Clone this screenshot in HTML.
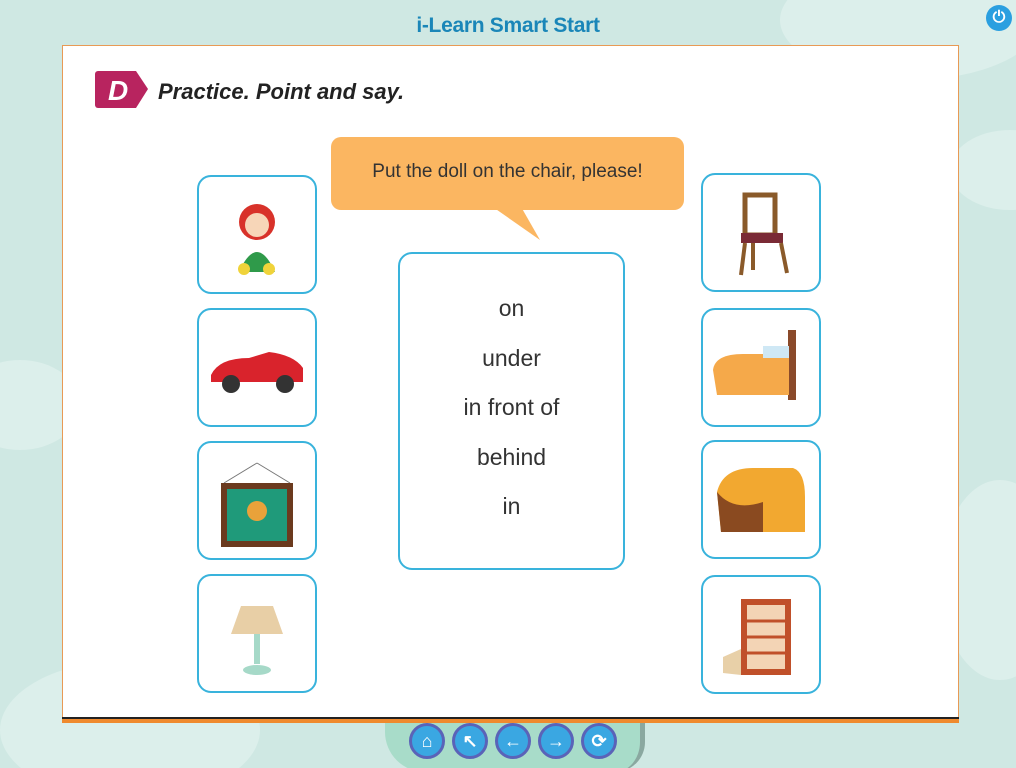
<!DOCTYPE html>
<html><head><meta charset="utf-8"><style>
html,body{margin:0;width:1016px;height:768px;overflow:hidden}
body{background:#cfe8e3;font-family:"Liberation Sans",sans-serif;position:relative}
.cloud{position:absolute;background:#dcefeb;border-radius:50%}
.title{position:absolute;left:0;width:1016px;top:14px;text-align:center;color:#1a86b8;font-weight:bold;font-size:21px;font-family:"Liberation Sans Narrow","Liberation Sans",sans-serif;letter-spacing:-0.3px}
.panel{position:absolute;left:62px;top:45px;width:895px;height:672px;background:#fff;border:1px solid #e89a55;border-bottom:none}
.bl{position:absolute;left:62px;top:717px;width:897px;height:2px;background:#222}
.ol{position:absolute;left:62px;top:719px;width:897px;height:4px;background:#ef8a2e}
.card{position:absolute;width:116px;height:115px;border:2px solid #39b3dc;border-radius:14px;background:#fff}
.center{position:absolute;left:398px;top:252px;width:223px;height:314px;border:2px solid #39b3dc;border-radius:14px;background:#fff;text-align:center;font-size:23px;color:#333}
.center div{height:49.5px}
.bubble{position:absolute;left:331px;top:137px;width:353px;height:73px;background:#fbb661;border-radius:10px;font-size:19px;color:#333;text-align:center;line-height:70px}
.btn{position:absolute;top:723px;width:30px;height:30px;border-radius:50%;background:#3aa7e2;border:3px solid #5a63b8;color:#fff;font-size:18px;text-align:center;line-height:30px;font-weight:bold}
</style></head><body>
<div class="cloud" style="left:780px;top:-40px;width:260px;height:120px"></div>
<div class="cloud" style="left:950px;top:130px;width:120px;height:80px"></div>
<div class="cloud" style="left:-40px;top:360px;width:120px;height:90px"></div>
<div class="cloud" style="left:940px;top:480px;width:120px;height:200px"></div>
<div class="cloud" style="left:0px;top:660px;width:260px;height:140px"></div>
<div style="position:absolute;left:385px;top:712px;width:255px;height:60px;background:#a8dcc9;border-radius:0 0 30px 40px;border-right:5px solid #8aa8a0"></div>
<div class="title">i-Learn Smart Start</div>
<div style="position:absolute;left:986px;top:5px;width:26px;height:26px;border-radius:50%;background:#2a9fe0;color:#fff;text-align:center;line-height:26px;font-size:16px;font-weight:bold">⏻</div>
<div class="panel"></div>
<div class="bl"></div><div class="ol"></div>
<svg style="position:absolute;left:94px;top:68px" width="60" height="44"><path d="M4 3h38l12 18-12 19H4a3 3 0 0 1-3-3V6a3 3 0 0 1 3-3z" fill="#b8245f"/><text x="14" y="32" fill="#fff" font-size="28" font-weight="bold" font-style="italic" font-family="Liberation Sans">D</text></svg>
<div style="position:absolute;left:158px;top:79px;font-size:22px;font-weight:bold;font-style:italic;color:#222">Practice. Point and say.</div>
<div class="bubble">Put the doll on the chair, please!</div>
<svg style="position:absolute;left:480px;top:205px" width="70" height="35"><path d="M10 0L60 35 40 0z" fill="#fbb661"/></svg>
<div class="center"><div style="height:41px"></div><div>on</div><div>under</div><div>in front of</div><div>behind</div><div>in</div></div>
<div class="card" style="left:197px;top:175px"><svg width="116" height="115"><circle cx="58" cy="45" r="18" fill="#d8322a"/><circle cx="58" cy="48" r="12" fill="#f7d6b8"/><path d="M40 95 Q58 55 76 95z" fill="#2f9a4a"/><circle cx="45" cy="92" r="6" fill="#f0d33a"/><circle cx="70" cy="92" r="6" fill="#f0d33a"/></svg></div>
<div class="card" style="left:197px;top:308px"><svg width="116" height="115"><path d="M12 65 Q20 48 50 48 L70 42 Q95 45 104 58 L104 72 H12z" fill="#d9232c"/><circle cx="32" cy="74" r="9" fill="#333"/><circle cx="86" cy="74" r="9" fill="#333"/></svg></div>
<div class="card" style="left:197px;top:441px"><svg width="116" height="115"><path d="M58 20 L25 40 M58 20 L91 40" stroke="#777"/><rect x="22" y="40" width="72" height="64" fill="#6b3a1e"/><rect x="28" y="46" width="60" height="52" fill="#1f9a7a"/><circle cx="58" cy="68" r="10" fill="#e9a23a"/></svg></div>
<div class="card" style="left:197px;top:574px"><svg width="116" height="115"><path d="M42 30 H74 L84 58 H32z" fill="#e8cfa6"/><rect x="55" y="58" width="6" height="30" fill="#a6d9c8"/><ellipse cx="58" cy="94" rx="14" ry="5" fill="#a6d9c8"/></svg></div>
<div class="card" style="left:701px;top:173px"><svg width="118" height="117"><path d="M42 20 H72 V60 H42z" fill="none" stroke="#8a5a2a" stroke-width="5"/><rect x="38" y="58" width="42" height="10" fill="#7a2a35"/><path d="M42 68 L38 100 M78 68 L84 98 M50 68 V95" stroke="#8a5a2a" stroke-width="4"/></svg></div>
<div class="card" style="left:701px;top:308px"><svg width="118" height="117"><rect x="85" y="20" width="8" height="70" fill="#8a4a2a"/><path d="M10 60 Q12 44 40 44 H86 V85 H14z" fill="#f5a94a"/><rect x="60" y="36" width="26" height="12" fill="#cfe8f5"/></svg></div>
<div class="card" style="left:701px;top:440px"><svg width="118" height="117"><path d="M14 50 Q20 26 50 26 H90 Q102 30 102 55 V90 H18z" fill="#f2a830"/><path d="M14 50 Q30 70 60 60 V90 H18z" fill="#8a4a20"/></svg></div>
<div class="card" style="left:701px;top:575px"><svg width="118" height="117"><rect x="38" y="22" width="50" height="76" fill="#c0502a"/><rect x="44" y="28" width="38" height="64" fill="#f3d4b5"/><path d="M44 44H82M44 60H82M44 76H82" stroke="#c0502a" stroke-width="3"/><path d="M20 80 L38 72 V98 L20 96z" fill="#e8d0a8"/></svg></div>
<div class="btn" style="left:409px">⌂</div>
<div class="btn" style="left:452px">↖</div>
<div class="btn" style="left:495px">←</div>
<div class="btn" style="left:538px">→</div>
<div class="btn" style="left:581px">⟳</div>
</body></html>
